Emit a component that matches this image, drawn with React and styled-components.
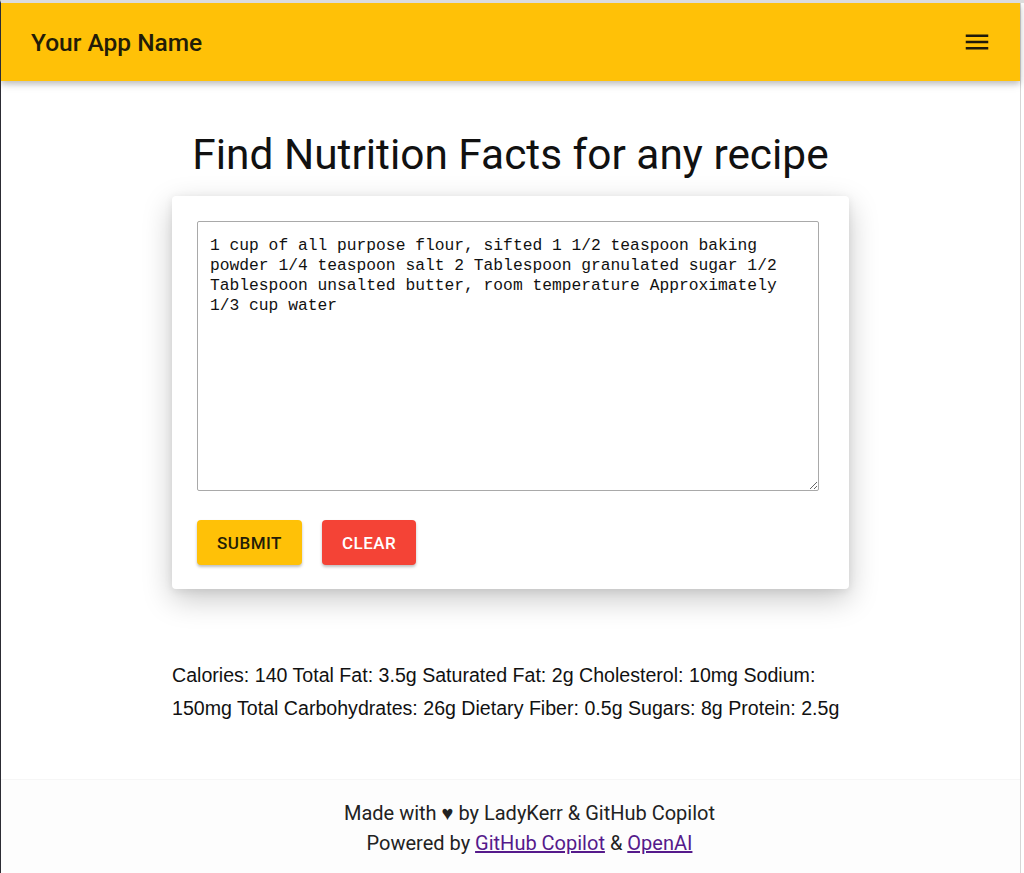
import React, { useState } from "react";
import styled, { createGlobalStyle } from "styled-components";

const GlobalStyle = createGlobalStyle`
    html, body {
        margin: 0;
        padding: 0;
        background: #ffffff;
    }
    body {
        font-family: Roboto, "Noto Sans", Arial, sans-serif;
        color: #212121;
    }
`;

const recipe =
    "1 cup of all purpose flour, sifted 1 1/2 teaspoon baking powder 1/4 teaspoon salt 2 Tablespoon granulated sugar 1/2 Tablespoon unsalted butter, room temperature Approximately 1/3 cup water";

const facts =
    "Calories: 140 Total Fat: 3.5g Saturated Fat: 2g Cholesterol: 10mg Sodium: 150mg Total Carbohydrates: 26g Dietary Fiber: 0.5g Sugars: 8g Protein: 2.5g";

const MenuIcon = () => (
    <svg width="30" height="30" viewBox="0 0 24 24" fill="currentColor">
        <path d="M3 18h18v-2H3v2zm0-5h18v-2H3v2zm0-7v2h18V6H3z" />
    </svg>
);

const App = () => {
    const [text, setText] = useState(recipe);

    return (
        <>
            <GlobalStyle />
            <Frame>
                <Page>
                    <Header>
                        <Title>Your App Name</Title>
                        <MenuButton aria-label="menu">
                            <MenuIcon />
                        </MenuButton>
                    </Header>

                    <Main>
                        <Heading>Find Nutrition Facts for any recipe</Heading>

                        <Card>
                            <RecipeInput
                                value={text}
                                onChange={(e) => setText(e.target.value)}
                            />
                            <Actions>
                                <Button variant="submit">Submit</Button>
                                <Button variant="clear" onClick={() => setText("")}>
                                    Clear
                                </Button>
                            </Actions>
                        </Card>

                        <Results>{facts}</Results>
                    </Main>

                    <Footer>
                        <p>Made with ♥ by LadyKerr &amp; GitHub Copilot</p>
                        <p>
                            Powered by <a href="#copilot">GitHub Copilot</a> &amp;{" "}
                            <a href="#openai">OpenAI</a>
                        </p>
                    </Footer>
                </Page>
            </Frame>
        </>
    );
};

const Frame = styled.div`
    min-height: 873px;
    border-left: 1px solid #2c2c34;
    border-top: 3px solid #dcdcdc;
    box-sizing: border-box;
    display: flex;
    overflow: hidden;
`;

const Page = styled.div`
    width: 1019px;
    border-right: 1px solid #d6d6d6;
    display: flex;
    flex-direction: column;
`;

const Header = styled.header`
    height: 78px;
    background-color: #ffc107;
    display: flex;
    align-items: center;
    justify-content: space-between;
    padding: 0 28px 0 30px;
    box-shadow: 0 3px 6px rgba(0, 0, 0, 0.22), 0 2px 12px rgba(0, 0, 0, 0.08);
    position: relative;
    z-index: 1;
`;

const Title = styled.h1`
    margin: 0;
    font-family: Roboto, sans-serif;
    font-weight: 500;
    font-size: 24.5px;
    color: #221c08;
`;

const MenuButton = styled.button`
    border: none;
    background: none;
    padding: 0;
    color: #1f1a0a;
    display: flex;
    cursor: pointer;
`;

const Main = styled.main`
    flex: 1;
    display: flex;
    flex-direction: column;
    align-items: center;
    padding-top: 50px;
`;

const Heading = styled.h2`
    margin: 0 0 17px;
    font-family: Roboto, sans-serif;
    font-weight: 400;
    font-size: 42.4px;
    line-height: 48px;
    color: #111;
`;

const Card = styled.section`
    width: 677px;
    box-sizing: border-box;
    background: #fff;
    border-radius: 4px;
    padding: 25px 30px 24px 25px;
    box-shadow: 0 10px 30px rgba(0, 0, 0, 0.22), 0 2px 8px rgba(0, 0, 0, 0.08);
`;

const RecipeInput = styled.textarea`
    display: block;
    width: 100%;
    height: 270px;
    box-sizing: border-box;
    border: 1px solid #a9a9a9;
    border-radius: 2px;
    padding: 14px 12px 12px;
    font-family: "Liberation Mono", "DejaVu Sans Mono", monospace;
    font-size: 16.3px;
    line-height: 20px;
    color: #111;
    resize: vertical;
    outline: none;
`;

const Actions = styled.div`
    display: flex;
    gap: 20px;
    margin-top: 29px;
`;

const Button = styled.button`
    height: 45px;
    padding: 0 20px;
    border: none;
    border-radius: 4px;
    font-family: Roboto, sans-serif;
    font-weight: 500;
    font-size: 17px;
    letter-spacing: 0.5px;
    text-transform: uppercase;
    cursor: pointer;
    background-color: ${({ variant }) => (variant === "clear" ? "#f44336" : "#ffc107")};
    color: ${({ variant }) => (variant === "clear" ? "#ffffff" : "#221c08")};
    box-shadow: 0 2px 3px rgba(0, 0, 0, 0.25);
`;

const Results = styled.p`
    width: 677px;
    margin: 70px 0 0;
    font-family: "Liberation Sans", Arial, sans-serif;
    font-size: 19.6px;
    line-height: 33px;
    color: #111;
`;

const Footer = styled.footer`
    margin-top: 54px;
    background: #fdfdfd;
    border-top: 1px solid #f6f6f6;
    padding: 18px 0 16px 38px;
    text-align: center;
    font-family: Roboto, sans-serif;
    font-size: 20px;
    line-height: 30px;
    color: #222;

    p {
        margin: 0;
    }

    a {
        color: #551a8b;
        text-decoration: underline;
    }
`;

export default App;
